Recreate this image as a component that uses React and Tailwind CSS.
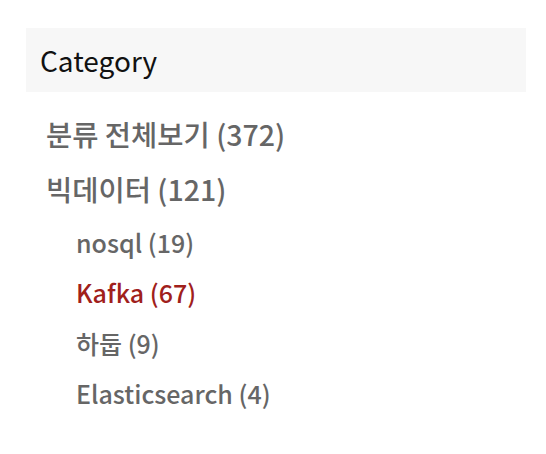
import React from 'react';

const categories = [
  { label: '분류 전체보기 (372)', depth: 0 },
  { label: '빅데이터 (121)', depth: 0 },
  { label: 'nosql (19)', depth: 1 },
  { label: 'Kafka (67)', depth: 1, active: true },
  { label: '하둡 (9)', depth: 1 },
  { label: 'Elasticsearch (4)', depth: 1 },
];

export default function App() {
  return (
    <div className="min-h-screen bg-white pt-[28px] pl-[26px] pr-[20px] font-['Noto_Sans_CJK_KR','Noto_Sans',sans-serif]">
      <div className="w-[500px] h-[64px] bg-[#f7f7f7] flex items-center pl-[14px]">
        <h2 className="text-[28px] text-[#111] font-normal">Category</h2>
      </div>
      <ul className="mt-[15px] pl-[20px]">
        {categories.map((c) => (
          <li
            key={c.label}
            className={
              c.depth === 0
                ? 'h-[55px] flex items-center text-[28.5px] font-medium text-[#666]'
                : `h-[50.5px] flex items-center pl-[30px] text-[25px] font-medium ${c.active ? 'text-[#a0201b]' : 'text-[#666]'}`
            }
          >
            <a href="#">{c.label}</a>
          </li>
        ))}
      </ul>
    </div>
  );
}
